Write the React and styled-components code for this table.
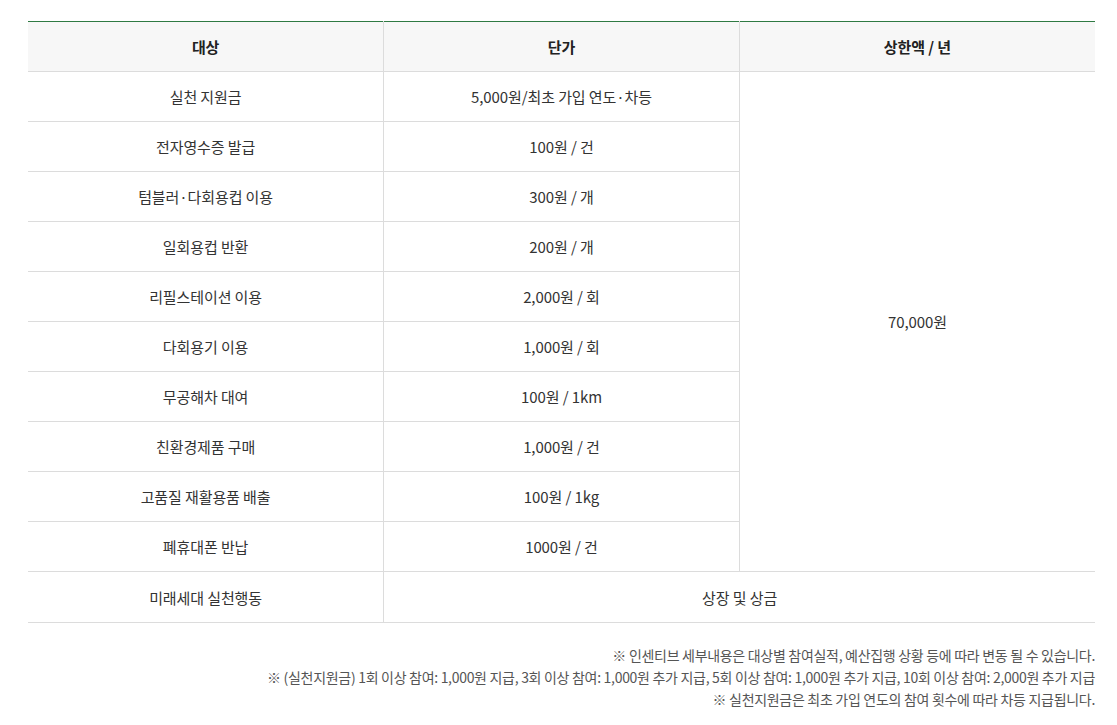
import React from 'react';
import styled, { createGlobalStyle } from 'styled-components';

const GlobalStyle = createGlobalStyle`
    body {
        margin: 0;
        background: #fff;
        font-family: 'Noto Sans CJK KR', 'Noto Sans', sans-serif;
        color: #333;
    }
`;

const Wrapper = styled.section`
    padding: 21px 22px 0 28px;
`;

const Table = styled.table`
    width: 100%;
    border-collapse: collapse;
    table-layout: fixed;
    border-top: 1px solid #2f7a43;
    th,
    td {
        height: 49px;
        padding: 0;
        text-align: center;
        vertical-align: middle;
        border-bottom: 1px solid #dcdcdc;
        font-size: 15px;
        letter-spacing: -0.1px;
    }
    th + th,
    td + td {
        border-left: 1px solid #dcdcdc;
    }
    td[rowspan] {
        border-left: 1px solid #dcdcdc;
    }
    tbody tr:last-child td {
        height: 50px;
    }
`;

const HeadCell = styled.th`
    background: #f7f7f7;
    font-weight: 700;
    color: #222;
`;

const Notes = styled.ul`
    list-style: none;
    margin: 21px 0 0;
    padding: 0;
    text-align: right;
    li {
        font-size: 14px;
        line-height: 22px;
        color: #555;
        letter-spacing: -0.3px;
    }
`;

const rows = [
    ['실천 지원금', '5,000원/최초 가입 연도·차등'],
    ['전자영수증 발급', '100원 / 건'],
    ['텀블러·다회용컵 이용', '300원 / 개'],
    ['일회용컵 반환', '200원 / 개'],
    ['리필스테이션 이용', '2,000원 / 회'],
    ['다회용기 이용', '1,000원 / 회'],
    ['무공해차 대여', '100원 / 1km'],
    ['친환경제품 구매', '1,000원 / 건'],
    ['고품질 재활용품 배출', '100원 / 1kg'],
    ['폐휴대폰 반납', '1000원 / 건'],
];

const notes = [
    '※ 인센티브 세부내용은 대상별 참여실적, 예산집행 상황 등에 따라 변동 될 수 있습니다.',
    '※ (실천지원금) 1회 이상 참여: 1,000원 지급, 3회 이상 참여: 1,000원 추가 지급, 5회 이상 참여: 1,000원 추가 지급, 10회 이상 참여: 2,000원 추가 지급',
    '※ 실천지원금은 최초 가입 연도의 참여 횟수에 따라 차등 지급됩니다.',
];

const App = () => (
    <Wrapper>
        <GlobalStyle />
        <Table>
            <thead>
                <tr>
                    <HeadCell>대상</HeadCell>
                    <HeadCell>단가</HeadCell>
                    <HeadCell>상한액 / 년</HeadCell>
                </tr>
            </thead>
            <tbody>
                {rows.map(([name, price], i) => (
                    <tr key={name}>
                        <td>{name}</td>
                        <td>{price}</td>
                        {i === 0 && <td rowSpan={rows.length}>70,000원</td>}
                    </tr>
                ))}
                <tr>
                    <td>미래세대 실천행동</td>
                    <td colSpan={2}>상장 및 상금</td>
                </tr>
            </tbody>
        </Table>
        <Notes>
            {notes.map((n) => (
                <li key={n}>{n}</li>
            ))}
        </Notes>
    </Wrapper>
);

export default App;
